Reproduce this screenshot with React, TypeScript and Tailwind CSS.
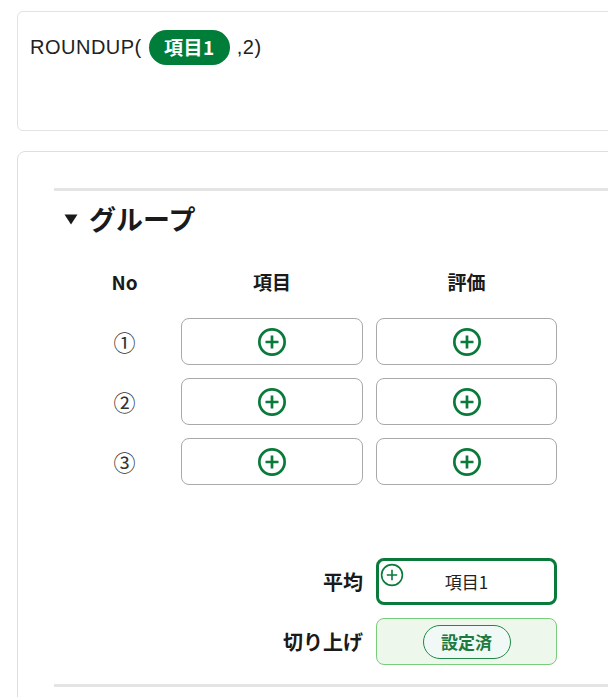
import React from "react";

const font = { fontFamily: '"Liberation Sans", "Noto Sans CJK JP", sans-serif' };
const jp = { fontFamily: '"Noto Sans CJK JP", "Liberation Sans", sans-serif' };

function PlusCircle({ size = 30, stroke = 2.6 }: { size?: number; stroke?: number }) {
  return (
    <svg width={size} height={size} viewBox="0 0 30 30" fill="none">
      <circle cx="15" cy="15" r={13.5 - stroke / 2 + 0.5} stroke="#0a7a3a" strokeWidth={stroke} />
      <path d="M15 8.5v13M8.5 15h13" stroke="#0a7a3a" strokeWidth={stroke} strokeLinecap="butt" />
    </svg>
  );
}

function Cell() {
  return (
    <div className="h-[47px] rounded-[8px] border border-[#a9a9a9] bg-white flex items-center justify-center">
      <PlusCircle size={30} stroke={2.7} />
    </div>
  );
}

export default function App() {
  const rows = ["①", "②", "③"];
  return (
    <div className="w-[608px] h-[697px] overflow-hidden bg-white relative" style={font}>
      <div className="pt-[11px] pl-[17px]">
        <div className="w-[640px] h-[120px] rounded-[6px] border border-[#e3e3e3] bg-white pl-[12px] pt-[18px]">
          <div className="flex items-center text-[20px] tracking-[0.5px] text-[#222] h-[34px]">
            <span style={font}>ROUNDUP(</span>
            <span
              className="mx-[7px] h-[35px] w-[81px] rounded-full bg-[#017d3a] text-white font-bold text-[19px] tracking-[0.5px] flex items-center justify-center"
              style={jp}
            >
              項目1
            </span>
            <span style={font}>,2)</span>
          </div>
        </div>
      </div>

      <div className="mt-[20px] ml-[17px] w-[640px] h-[600px] rounded-[8px] border border-[#dedede] bg-white pt-[36px] pl-[36px]">
        <div className="h-[3px] bg-[#e4e4e4]" />
        <div className="flex items-center h-[56px] pl-[10px]" style={jp}>
          <svg width="14" height="11" viewBox="0 0 14 11" className="mr-[11px]">
            <path d="M0.5 0.5h13L7 10.5z" fill="#1a1a1a" />
          </svg>
          <span className="text-[27px] font-bold text-[#1a1a1a]">グループ</span>
        </div>

        <div
          className="ml-[27px] mt-[23px] grid grid-cols-[87px_182px_181px] gap-x-[13px] items-center"
          style={jp}
        >
          <div className="text-center text-[19px] font-bold text-[#1a1a1a] h-[24px] leading-[24px]">No</div>
          <div className="text-center text-[19px] font-bold text-[#1a1a1a] h-[24px] leading-[24px]">項目</div>
          <div className="text-center text-[19px] font-bold text-[#1a1a1a] h-[24px] leading-[24px]">評価</div>
        </div>

        <div
          className="ml-[27px] mt-[24px] grid grid-cols-[87px_182px_181px] gap-x-[13px] gap-y-[13px] items-center"
          style={jp}
        >
          {rows.map((r) => (
            <React.Fragment key={r}>
              <div className="text-center text-[22px] text-[#333]">{r}</div>
              <Cell />
              <Cell />
            </React.Fragment>
          ))}
          <div className="col-span-3 h-[47px]" />
          <div className="col-span-2 text-right text-[20px] font-bold text-[#1a1a1a]">平均</div>
          <div className="relative h-[47px] rounded-[8px] border-[3px] border-[#0a7a3a] bg-white flex items-center justify-center text-[17px] text-[#222]">
            <div className="absolute left-[1px] top-[2px]">
              <PlusCircle size={24} stroke={2} />
            </div>
            項目1
          </div>
          <div className="col-span-2 text-right text-[20px] font-bold text-[#1a1a1a]">切り上げ</div>
          <div className="h-[47px] rounded-[8px] border-[1.5px] border-[#79cc79] bg-[#edf7ec] flex items-center justify-center">
            <div className="h-[34px] w-[88px] rounded-full border-[1.5px] border-[#1f8a45] bg-[#f1f9f6] flex items-center justify-center text-[17px] font-bold text-[#1b7a3f]">
              設定済
            </div>
          </div>
        </div>
        <div className="mt-[19px] h-[3px] bg-[#e4e4e4]" />
      </div>
    </div>
  );
}
